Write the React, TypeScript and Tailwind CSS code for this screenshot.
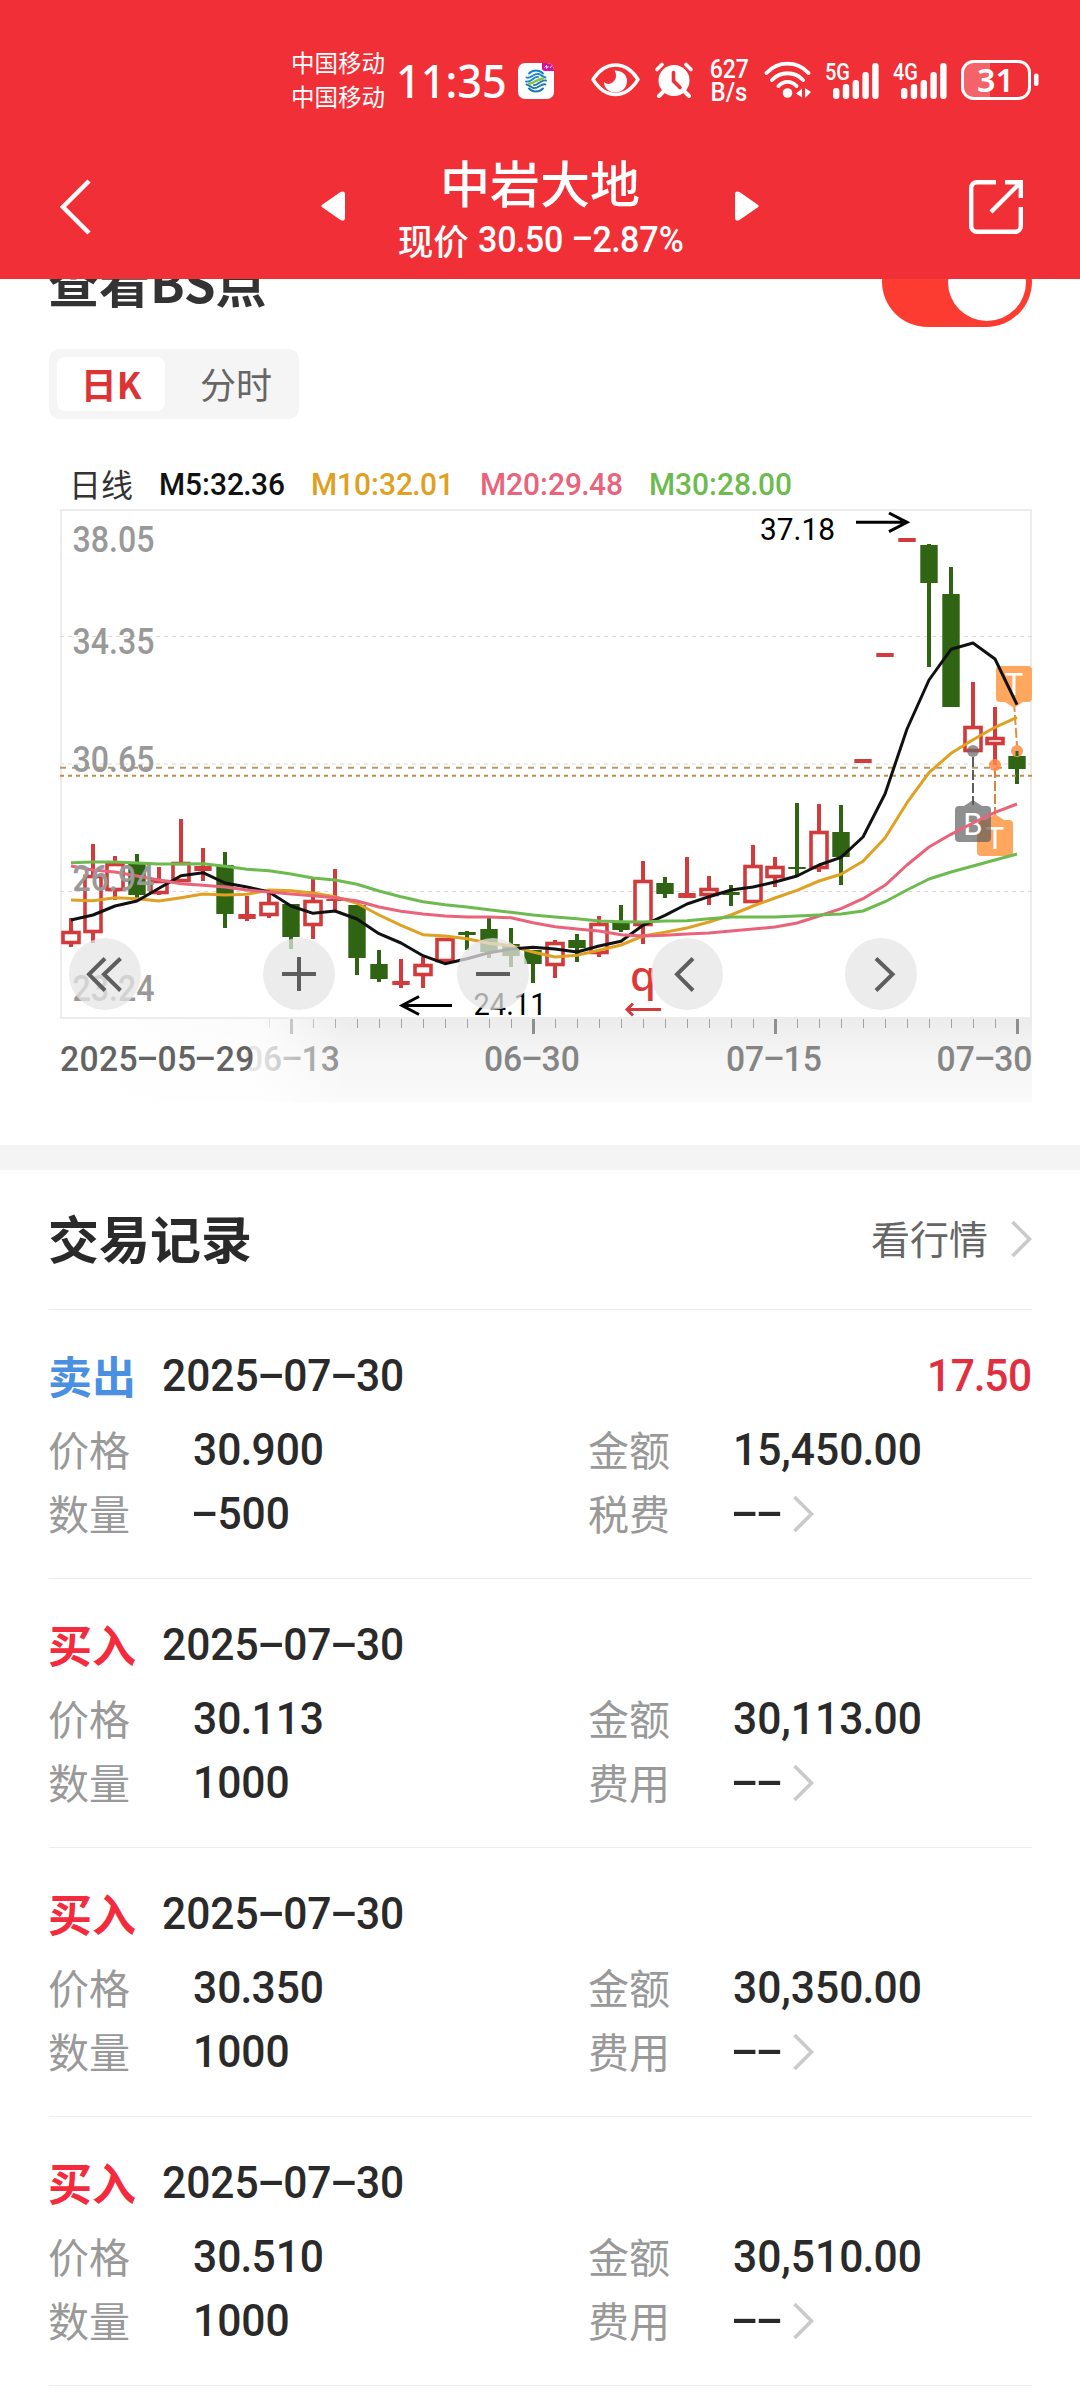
import type { ReactNode } from 'react'

type Candle = [up: boolean, high: number, top: number, bottom: number, low: number]

// pixel rows inside the chart; one candle every 22px starting at x=71
const CANDLES: Candle[] = [
  [true, 918, 931, 944, 947], [true, 844, 875, 933, 943], [true, 856, 863, 891, 900], [false, 854, 864, 895, 898],
  [true, 867, 880, 894, 895], [true, 819, 862, 882, 882], [true, 848, 866, 871, 881], [false, 852, 865, 914, 928],
  [true, 896, 914, 919, 921], [true, 893, 902, 916, 918], [false, 904, 904, 937, 949], [true, 879, 900, 926, 939],
  [true, 869, 899, 901, 910], [false, 905, 905, 958, 975], [false, 950, 964, 979, 982], [true, 959, 981, 985, 988],
  [true, 957, 964, 976, 988], [true, 938, 938, 962, 962], [false, 931, 932, 935, 950], [false, 918, 929, 952, 958],
  [false, 928, 944, 956, 967], [false, 950, 950, 964, 983], [true, 940, 942, 966, 978], [false, 934, 940, 948, 962],
  [true, 916, 923, 954, 957], [false, 905, 922, 930, 932], [true, 861, 880, 926, 944], [false, 877, 883, 894, 898],
  [true, 857, 893, 898, 898], [true, 876, 888, 896, 905], [false, 885, 892, 895, 906], [true, 845, 865, 903, 903],
  [true, 857, 866, 878, 887], [false, 803, 867, 869, 877], [true, 804, 831, 869, 872], [false, 805, 832, 857, 885],
  [true, 759, 759, 763, 763], [true, 653, 653, 657, 657], [true, 538, 538, 542, 542], [false, 544, 545, 583, 667],
  [false, 567, 594, 707, 707], [true, 682, 726, 752, 752], [true, 707, 737, 745, 765], [false, 751, 756, 769, 784],
]

const AVERAGES = [
  {
    color: '#e0a022',
    ys: [900, 900.7, 897.7, 898.7, 901, 897.7, 894, 895, 894.3, 890, 890.7, 893, 896.7, 903.3, 915, 925.3, 934.7, 936, 938.7, 943.3, 945.7, 952, 957, 955.3, 950.3, 945, 936, 932.3, 928, 922, 915, 906, 898, 890.3, 881, 874.3, 861.3, 838, 802.7, 772.7, 753.3, 739.7, 727.3, 717.3],
  },
  {
    color: '#111111',
    ys: [920, 915, 906, 901, 888.3, 875.7, 872.7, 883, 887, 892, 906, 913.3, 911, 919, 933.7, 943, 955.7, 963.7, 958.7, 952.7, 949, 947.3, 949, 952, 946, 941.3, 925.3, 915.3, 904, 896.7, 890, 887, 882, 876, 865, 857.3, 837, 794, 729, 680, 649.3, 643, 659, 704.7],
  },
  {
    color: '#e9637a',
    ys: [866, 870, 872, 876, 880, 883.7, 885.3, 887, 890, 892, 894, 895.7, 897.7, 901, 907, 911.3, 914, 916, 917, 917, 917.7, 922.7, 926.7, 929, 931, 934.7, 936, 935.3, 934, 933, 931, 929, 927, 923, 916, 908.7, 898.7, 885.3, 865, 847, 834.3, 823, 812.3, 804],
  },
  {
    color: '#6dbb4f',
    ys: [862.7, 862, 862, 863, 864, 864, 863.7, 866.3, 869.3, 870.7, 874, 878, 880, 884.3, 891, 896.7, 901.7, 904.7, 907, 909.7, 912.3, 915, 917, 918.7, 921, 921.7, 922, 921, 920.7, 918.7, 917, 917, 917, 916, 915, 914, 911, 901.7, 890, 879, 872, 866, 860, 854],
  },
]

const PRICE_LABELS: [string, number][] = [['38.05', 552], ['34.35', 654], ['30.65', 772], ['26.94', 891], ['23.24', 1001]]

const RECORDS = [
  { side: '卖出', date: '2025-07-30', price: '30.900', amount: '15,450.00', qty: '-500', feeLabel: '税费', profit: '17.50' },
  { side: '买入', date: '2025-07-30', price: '30.113', amount: '30,113.00', qty: '1000', feeLabel: '费用' },
  { side: '买入', date: '2025-07-30', price: '30.350', amount: '30,350.00', qty: '1000', feeLabel: '费用' },
  { side: '买入', date: '2025-07-30', price: '30.510', amount: '30,510.00', qty: '1000', feeLabel: '费用' },
]

const candleX = (i: number) => 71 + 22 * i

/** Narrow DIN-like figures: Roboto squeezed a little, tight points, and hyphens as wide as a digit. */
function Num({ text, className = 'origin-left' }: { text: string; className?: string }) {
  return (
    <span className={`inline-block whitespace-nowrap font-['Roboto',sans-serif] font-medium scale-x-[0.945] ${className}`}>
      {text.split(/([-.])/).map((part, i) => {
        if (part === '-') {
          return (
            <span key={i} className="inline-block w-[0.575em] text-center">
              <span className="inline-block -translate-y-[0.05em] scale-x-[1.95]">-</span>
            </span>
          )
        }
        if (part === '.') return <span key={i} className="-mx-[0.02em]">{part}</span>
        return part
      })}
    </span>
  )
}

function Signal({ label }: { label: string }) {
  return (
    <svg className="ml-3 h-[40px] w-14 shrink-0 overflow-visible" viewBox="0 0 56 40" fill="#fff">
      <text x="1" y="20" fontSize="24" fontWeight="500" fontFamily="Roboto, sans-serif" textLength="25" lengthAdjust="spacingAndGlyphs">{label}</text>
      {[28, 24, 20, 12, 3].map((top, i) => (
        <rect key={top} x={9 + i * 9.8} y={top} width="6.4" height={39 - top} rx="3" />
      ))}
    </svg>
  )
}

function StatusBar() {
  return (
    <div className="flex h-[158px] items-start pl-[291px] pt-[44px] text-white">
      <div className="-mt-[1px] flex h-[72px] w-[94px] shrink-0 flex-col justify-center whitespace-nowrap text-[23.5px] leading-[34px]">
        <span>中国移动</span>
        <span>中国移动</span>
      </div>
      <div className="ml-[11px] flex h-[72px] w-[109px] shrink-0 items-center">
        <span className="origin-left scale-x-[0.94] font-['Noto_Sans',sans-serif] text-[46px] font-medium leading-none">11:35</span>
      </div>
      <svg className="ml-[13px] mt-[19px] h-9 w-9 shrink-0" viewBox="0 0 36 36" fill="none">
        <rect width="36" height="36" rx="7" fill="#fff" />
        <path d="M24 0h5a7 7 0 0 1 7 7v1H27a3 3 0 0 1-3-3z" fill="#d5129a" />
        <path d="M26.500 4.500l2-2 0 3 2-2.500M32 5l2-2.500" stroke="#fff" strokeWidth="0.900" />
        <g strokeWidth="1.900" strokeLinecap="round">
          <path d="M11 10.500c4-4 10-4 14 0M8.500 14.500c4 2 7-4.500 12-3.500 2.500.5 5 3.500 7 3.500M8 18.500c5 1.500 8-5.500 12-4.500" stroke="#1b86c6" />
          <path d="M25 25.500c-4 4-10 4-14 0M27.500 21.500c-4-2-7 4.500-12 3.500-2.500-.5-5-3.500-7-3.500M28 17.500c-5-1.500-8 5.500-12 4.500" stroke="#1b76b6" />
          <path d="M11 20.500c4 .500 6-3.500 14-5" stroke="#85c440" strokeWidth="2.400" />
        </g>
      </svg>
      <svg className="ml-[37px] mt-[18px] h-[35px] w-[49px] shrink-0" viewBox="0 0 49 35" fill="none">
        <path d="M2 17.500C8 8 15 3 24.500 3S41 8 47 17.500C41 27 34 32.500 24.500 32.500S8 27 2 17.500z" stroke="#fff" strokeWidth="3.400" strokeLinejoin="round" />
        <path d="M23.500 8.500c7 0 12.500 4 12.500 10.500 0 6.500-5 11.500-11.500 11.500S13 26 13 20c1.500 1.500 4 2.500 6.500 1.500 5.500-2 7-8 4-13z" fill="#fff" />
      </svg>
      <svg className="ml-[15px] mt-[17px] h-[37px] w-[38px] shrink-0" viewBox="0 0 38 37" fill="none" stroke="#fff" strokeLinecap="round">
        <circle cx="19" cy="19.500" r="15.500" fill="#fff" stroke="none" />
        <path d="M2 8.500L7 3.500M36 8.500l-5-5" strokeWidth="3.600" />
        <path d="M8 31l-4 4M30 31l4 4" strokeWidth="4" />
        <path d="M18.500 11.500V20l6.500 6.500" stroke="#f12f36" strokeWidth="3.600" />
      </svg>
      <div className="ml-[15px] mt-[15px] w-[42px] shrink-0 text-center font-['Roboto',sans-serif] text-[25px] font-medium leading-[22.5px]">
        <div className="scale-x-[0.92]">627</div>
        <div className="scale-x-[0.96]">B/s</div>
      </div>
      <svg className="ml-[14px] mt-[17px] h-[38px] w-12 shrink-0" viewBox="0 0 48 38" fill="none" stroke="#fff" strokeWidth="3.800" strokeLinecap="round">
        <path d="M2.500 12C14-.5 33-.5 44.500 12M8 19c8.500-9 22.500-9 31 0M14.500 25c5-5.500 13-5.500 18 0" />
        <circle cx="23.500" cy="32" r="4.800" fill="#fff" stroke="none" />
        <path d="M32 32.500l6-5v9zM41 27v10l6-6z" fill="#fff" stroke="none" />
      </svg>
      <div className="mt-4 flex">
        <Signal label="5G" />
        <Signal label="4G" />
      </div>
      <svg className="ml-[13px] mt-4 h-10 w-[78px] shrink-0 overflow-visible" viewBox="0 0 78 40" fill="none">
        <path d="M12 2h17v36H12A10.500 10.500 0 0 1 1.500 27.500v-15A10.500 10.500 0 0 1 12 2z" fill="#fff" fillOpacity="0.250" />
        <rect x="1.500" y="1.500" width="67" height="37" rx="11" stroke="#fff" strokeWidth="3" />
        <rect x="73" y="13.500" width="4.500" height="12.500" rx="2" fill="#fff" />
        <text x="34.500" y="32" textAnchor="middle" fontSize="33" fontWeight="600" fontFamily="Noto Sans, sans-serif" fill="#fff" textLength="37" lengthAdjust="spacingAndGlyphs">31</text>
      </svg>
    </div>
  )
}

function Header() {
  return (
    <header className="relative z-10 h-[279px] bg-[#f12f36] text-white">
      <StatusBar />
      <div className="grid h-[100px] grid-cols-[321px_438px_1fr] items-start">
        <svg className="ml-[58px] mt-[20px] h-[58px] w-[34px]" viewBox="0 0 34 58" fill="none" stroke="#fff" strokeWidth="4.500">
          <path d="M31 3L5 29l26 26" />
        </svg>
        <div className="flex items-start justify-between">
          <svg className="mt-[33px] h-[30px] w-6" viewBox="0 0 24 30" fill="#fff">
            <path d="M1.500 13.500L19.500 1Q24-1 24 3.500v23q0 4.500-4.500 2.500L1.500 16.500q-2.500-1.500 0-3z" />
          </svg>
          <div className="-mt-[3px] flex flex-col items-center whitespace-nowrap">
            <h1 className="h-[53px] text-[50px] font-medium leading-[53px]">中岩大地</h1>
            <div className="mt-[4px] flex h-[56px] items-center text-[35.5px] leading-[56px]">
              <span className="-mt-[1px] mr-[9px] font-medium">现价</span>
              <Num text="30.50" className="mr-[5px] origin-left text-[36px]" />
              <Num text="-2.87%" className="-mr-[8px] origin-left text-[36px]" />
            </div>
          </div>
          <svg className="mt-[33px] h-[30px] w-6" viewBox="0 0 24 30" fill="#fff">
            <path d="M22.500 13.500L4.500 1Q0-1 0 3.500v23Q0 31 4.500 29l18-12.500q2.500-1.500 0-3z" />
          </svg>
        </div>
        <svg className="ml-[210px] mt-[22px] h-[54px] w-[54px]" viewBox="0 0 54 54" fill="none" stroke="#fff" strokeWidth="4.400">
          <path d="M27 2.200H8A5.800 5.800 0 0 0 2.200 8v38A5.800 5.800 0 0 0 8 51.800h38a5.800 5.800 0 0 0 5.800-5.800V27" />
          <path d="M36 2.200h15.800V18M51 3L22 32" />
        </svg>
      </div>
    </header>
  )
}

function CandleShape({ candle, x }: { candle: Candle; x: number }) {
  const [up, high, top, bottom, low] = candle
  const color = up ? '#d23b3b' : '#2f6413'
  const hollow = up && bottom - top > 6
  return (
    <g stroke={color} strokeWidth="4">
      {high < top && <path d={`M${x} ${high}V${top}`} />}
      {low > bottom && <path d={`M${x} ${bottom}V${low}`} />}
      {hollow ? (
        <rect x={x - 8} y={top + 1.5} width="16" height={bottom - top - 3} fill="#fff" strokeWidth="3.600" />
      ) : (
        <rect x={x - 8.7} y={top} width="17.400" height={bottom - top} fill={color} stroke="none" />
      )}
    </g>
  )
}

function Flag({ x, y, letter, fill, children }: { x: number; y: number; letter: string; fill: string; children?: ReactNode }) {
  return (
    <g>
      <g fill={fill}>
        <rect x={x} y={y} width="36" height="36" rx="4" />
        {children}
      </g>
      <text x={x + 18} y={y + 29} textAnchor="middle" fontSize="31" fontFamily="Roboto, sans-serif" fill="#fff">{letter}</text>
    </g>
  )
}

function RoundButton({ x, d }: { x: number; d: string }) {
  return (
    <g transform={`translate(${x} 974)`}>
      <circle r="36" fill="#e5e5e5" fillOpacity="0.740" />
      <path d={d} fill="none" stroke="#5e5e5e" strokeWidth="4" />
    </g>
  )
}

function KLineChart() {
  return (
    <div className="relative h-[593px] font-['Roboto',sans-serif] text-[35.6px] leading-none text-[#858585]">
      <svg className="block h-[593px] w-full" viewBox="0 509 1080 593" fontFamily="Roboto, sans-serif">
        <defs>
          <linearGradient id="axis" x1="0" y1="0" x2="0" y2="1">
            <stop offset="0" stopColor="#ececec" />
            <stop offset="0.500" stopColor="#f6f6f6" />
            <stop offset="1" stopColor="#fafafa" />
          </linearGradient>
        </defs>
        <rect x="60" y="1018" width="972" height="84" fill="url(#axis)" />
        <rect x="61" y="510" width="970" height="508" fill="#fff" stroke="#ececec" strokeWidth="2" />
        <g strokeDasharray="4 4">
          <path d="M60 636.500H1032M60 891.500H1032" stroke="#d9d9d9" />
          <path d="M60 764H1032" stroke="#ececec" strokeWidth="2" />
        </g>

        {CANDLES.map((c, i) => <CandleShape key={i} candle={c} x={candleX(i)} />)}

        <path d="M60 767.700H1004" stroke="#b59a68" strokeWidth="2" strokeDasharray="6 6" />
        <path d="M60 775.700H1032" stroke="#bd8a48" strokeWidth="2" strokeDasharray="4 4" />

        {/* buy / T markers with their leader lines */}
        <g fill="none" strokeWidth="2" strokeDasharray="10 3">
          <path d="M973 757v48" stroke="#5d5d5d" />
          <path d="M995 768v50" stroke="#dc8440" />
          <path d="M1014 702l3 44" stroke="#e58d48" />
        </g>
        <circle cx="973" cy="751" r="6" fill="#666" fillOpacity="0.700" />
        <circle cx="995" cy="765" r="6" fill="#ff8a45" fillOpacity="0.850" />
        <circle cx="1017" cy="751" r="6" fill="#f9a060" />
        <path d="M1017 751V756" stroke="#2f6413" strokeWidth="3" />
        <Flag x={996} y={666} letter="T" fill="#ffa65f"><path d="M1005 702l9 6 9-6z" /></Flag>
        <Flag x={977} y={820} letter="T" fill="#ffa65f"><path d="M986 820l9-6 9 6z" /></Flag>
        <Flag x={955} y={806} letter="B" fill="rgba(90,90,90,0.680)"><path d="M964 806l9-6 9 6z" /></Flag>

        {AVERAGES.map(({ color, ys }) => (
          <polyline key={color} points={ys.map((y, i) => `${candleX(i)},${y}`).join(' ')} fill="none" stroke={color} strokeWidth="3" strokeLinejoin="round" />
        ))}

        <g fontSize="36" fontWeight="500" fill="#999">
          {PRICE_LABELS.map(([label, y]) => (
            <text key={label} x="72.500" y={y} textLength="82" lengthAdjust="spacingAndGlyphs">{label}</text>
          ))}
        </g>

        <text x="760" y="540" fontSize="31" textLength="75" lengthAdjust="spacingAndGlyphs">37.18</text>
        <text x="473.500" y="1015" fontSize="31" textLength="73" lengthAdjust="spacingAndGlyphs">24.11</text>
        <g fill="none" stroke="#000" strokeWidth="3">
          <path d="M856 522.300H906M889 513l18 9.300-18 9.300" />
          <path d="M452 1005.500H402M419 996.500l-17 9 17 9" />
        </g>
        <text x="630" y="991" fontSize="42" fontFamily="Noto Sans, sans-serif" fontWeight="500" fill="#dd3838">q</text>
        <path d="M661 1009.500H627M633 1003.500l-6 6 6 6" fill="none" stroke="#d23b3b" strokeWidth="3" />

        <g stroke="#a3a3a3">
          {CANDLES.map((_, i) =>
            i < 9 ? null : i % 11 === 10 ? (
              <path key={i} d={`M${candleX(i) + 0.5} 1019V1034`} strokeWidth="3" stroke="#8f8f8f" />
            ) : (
              <path key={i} d={`M${candleX(i) + 0.5} 1019V1028`} />
            ),
          )}
        </g>

        <RoundButton x={105} d="M0-15.500L-16 .300 0 16.500M15.500-15.500L-1 .300l16.500 16.200" />
        <RoundButton x={299} d="M-17 0H17M0-17V17" />
        <RoundButton x={493} d="M-17 0H17" />
        <RoundButton x={687} d="M6-15.500L-10 .300 6 16.500" />
        <RoundButton x={881} d="M-5-15.500L11.500 .300-5 16.500" />
      </svg>
      <Num text="06-13" className="absolute left-[244px] top-[533px] origin-left" />
      <Num text="06-30" className="absolute left-[484px] top-[533px] origin-left" />
      <Num text="07-15" className="absolute left-[726px] top-[533px] origin-left" />
      <Num text="07-30" className="absolute right-[48px] top-[533px] origin-right" />
      <div className="absolute left-[58px] top-[510px] h-[83px] w-[292px] bg-linear-to-r from-white from-0% via-white/80 via-68% to-white/0" />
      <Num text="2025-05-29" className="absolute left-[60px] top-[533px] origin-left tracking-[0.012em] text-[#636363]" />
    </div>
  )
}

function Chevron({ className = '' }: { className?: string }) {
  return (
    <svg className={`h-[38px] w-[22px] ${className}`} viewBox="0 0 22 38" fill="none" stroke="#cacaca" strokeWidth="3.600">
      <path d="M2.500 2L19.500 19l-17 17" />
    </svg>
  )
}

function Record({ record }: { record: (typeof RECORDS)[number] }) {
  const label = '-mt-[5px] -ml-[1px] text-[41px] text-[#999]'
  return (
    <li className="h-[269px] border-b border-[#ececec] pt-[37px] text-[45px] text-[#2a2a2a]">
      <div className="flex h-[60px] items-center">
        <span className={`-ml-[1px] -mt-[4px] w-[114px] text-[44px] font-bold ${record.side === '卖出' ? 'text-[#4a90e2]' : 'text-[#f42b3d]'}`}>{record.side}</span>
        <Num text={record.date} className="-mt-[2px] origin-left" />
        {record.profit && <Num text={record.profit} className="-mt-[2px] ml-auto origin-right tracking-[-0.01em] text-[#e22f40]" />}
      </div>
      <div className="mt-[12px] grid auto-rows-[64px] grid-cols-[144px_396px_144px_1fr] items-center">
        <span className={label}>价格</span>
        <Num text={record.price} className="-mt-[2px] origin-left" />
        <span className={label}>金额</span>
        <Num text={record.amount} className="-mt-[2px] origin-left" />
        <span className={label}>数量</span>
        <Num text={record.qty} className="-mt-[3px] origin-left" />
        <span className={label}>{record.feeLabel}</span>
        <span className="-mt-[3px] flex items-center">
          <Num text="--" />
          <Chevron className="ml-[7px]" />
        </span>
      </div>
    </li>
  )
}

export default function App() {
  return (
    <div className="h-[2400px] w-[1080px] overflow-hidden bg-white font-['Noto_Sans_CJK_SC',sans-serif]">
      <Header />
      <section>
        <div className="-mt-[43px] flex h-[91px] items-center justify-between pl-[48px] pr-[48px]">
          <h2 className="text-[51px] font-bold leading-none text-[#333]">查看BS点</h2>
          <div className="flex h-[91px] w-[150px] items-center justify-end rounded-full bg-[#fc3b31] pr-[6px]">
            <div className="size-[78px] rounded-full bg-white" />
          </div>
        </div>
        <div className="ml-[49px] mt-[22px] flex h-[70px] w-[250px] items-center rounded-[10px] bg-[#f5f5f5] px-2 text-[36px] text-[#666]">
          <span className="flex h-[54px] w-[108px] items-center justify-center rounded-lg bg-white pb-[3px] font-bold text-[#dc3434]">日K</span>
          <span className="flex-1 pb-[3px] pl-4 text-center">分时</span>
        </div>
        <div className="mt-[41px] grid h-[49px] grid-cols-[90px_152px_169px_169px_1fr] items-center pl-[69px] text-[31.6px]">
          <span className="-mt-[3px] text-[32px] text-[#333]">日线</span>
          <Num text="M5:32.36" className="mt-[1px] origin-left text-[#111]" />
          <Num text="M10:32.01" className="mt-[1px] origin-left text-[#e0a022]" />
          <Num text="M20:29.48" className="mt-[1px] origin-left text-[#e9637a]" />
          <Num text="M30:28.00" className="mt-[1px] origin-left text-[#6dbb4f]" />
        </div>
        <KLineChart />
      </section>
      <section className="mt-[43px] border-t-[25px] border-[#f4f4f4] pl-[49px] pr-[48px]">
        <div className="flex h-[140px] items-center border-b border-[#ececec]">
          <h2 className="-ml-[1px] -mt-[5px] text-[51px] font-bold text-[#2a2a2a]">交易记录</h2>
          <span className="-mt-[4px] ml-auto mr-[22px] text-[39px] text-[#666]">看行情</span>
          <Chevron className="-mt-[2px]" />
        </div>
        <ul>
          {RECORDS.map((record, i) => <Record key={i} record={record} />)}
        </ul>
      </section>
    </div>
  )
}
